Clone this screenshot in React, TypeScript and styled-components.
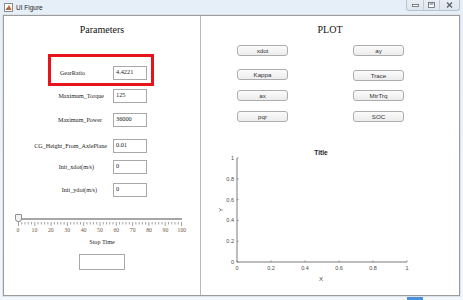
import styled, { createGlobalStyle } from "styled-components";

const GlobalStyle = createGlobalStyle`
  html, body {
    margin: 0;
    padding: 0;
    background: #eef3f8;
  }
  * { box-sizing: border-box; }
`;

const Window = styled.div`
  width: 463px;
  height: 300px;
  display: flex;
  flex-direction: column;
  background: linear-gradient(180deg, #e6eef7 0%, #eef3f9 40%, #f3f6fa 100%);
  position: relative;
  overflow: hidden;
`;

const TitleBar = styled.div`
  height: 15px;
  display: flex;
  align-items: center;
  padding: 0 3px 0 4px;
  gap: 3px;
`;

const TitleText = styled.span`
  font-family: "Liberation Sans", Arial, sans-serif;
  font-size: 6.5px;
  color: #1e1e1e;
`;

const WindowControls = styled.div`
  margin-left: auto;
  align-self: flex-start;
  display: flex;
  height: 11px;
  border: 1px solid #b9c3cf;
  border-top: none;
  border-radius: 0 0 3px 3px;
  background: linear-gradient(180deg, #e9eef4, #dfe6ee);
`;

const ControlButton = styled.div<{ $w: number }>`
  width: ${(p) => p.$w}px;
  height: 100%;
  display: flex;
  align-items: center;
  justify-content: center;
  border-right: 1px solid #c3ccd6;
  &:last-child { border-right: none; }
`;

const Body = styled.div`
  flex: 1;
  display: flex;
  margin: 0 3px 4px 3px;
  border: 1px solid #9c9c9c;
  background: #ffffff;
  box-shadow: 0 0 0 1px #dde3ea;
`;

const LeftPanel = styled.div`
  width: 197px;
  border-right: 1px solid #b8b8b8;
  display: flex;
  flex-direction: column;
`;

const RightPanel = styled.div`
  flex: 1;
  display: flex;
  flex-direction: column;
`;

const Heading = styled.div`
  height: 28px;
  line-height: 28px;
  text-align: center;
  font-family: "Liberation Serif", "Times New Roman", serif;
  font-size: 10px;
  color: #111;
`;

const Highlight = styled.div`
  margin: 10px 0 0 44px;
  width: 106px;
  height: 32px;
  border: 3px solid #e8141b;
  padding-top: 9px;
`;

const Row = styled.div<{ $labelCol: number; $top?: number }>`
  display: grid;
  grid-template-columns: ${(p) => p.$labelCol}px 34px;
  align-items: center;
  height: 14px;
  margin-top: ${(p) => p.$top ?? 0}px;
`;

const Label = styled.span<{ $pad: number }>`
  text-align: right;
  padding-right: ${(p) => p.$pad}px;
  font-family: "Liberation Serif", "Times New Roman", serif;
  font-size: 6.1px;
  color: #222;
  white-space: nowrap;
`;

const ValueBox = styled.div`
  height: 14px;
  border: 1px solid #a9a9a9;
  background: #fff;
  padding: 1px 2px;
  font-family: "Liberation Serif", "Times New Roman", serif;
  font-size: 6.3px;
  line-height: 8px;
  color: #222;
`;

const SliderBlock = styled.div`
  margin: 16px 0 0 14px;
  width: 164px;
  display: flex;
  flex-direction: column;
`;

const TrackArea = styled.div`
  position: relative;
  height: 9px;
`;

const Track = styled.div`
  position: absolute;
  left: 0;
  right: 0;
  top: 5px;
  height: 2px;
  background: #a6a6a6;
`;

const Thumb = styled.div`
  position: absolute;
  left: -3px;
  top: 1px;
  width: 7px;
  height: 8px;
  background: #f2f2f2;
  border: 1px solid #8f8f8f;
  border-radius: 1px 1px 3px 3px;
`;

const TickLabels = styled.div`
  display: flex;
  justify-content: space-between;
  margin: 0 -6px;
  height: 9px;
`;

const TickLabel = styled.span`
  width: 12px;
  text-align: center;
  font-family: "Liberation Serif", "Times New Roman", serif;
  font-size: 5.8px;
  line-height: 9px;
  color: #6e5a44;
`;

const Caption = styled.div`
  margin-top: 2px;
  height: 10px;
  line-height: 10px;
  text-align: center;
  font-family: "Liberation Serif", "Times New Roman", serif;
  font-size: 6.2px;
  color: #222;
`;

const StopBox = styled.div`
  margin: 7px 0 0 75px;
  width: 46px;
  height: 16px;
  border: 1px solid #a9a9a9;
`;

const ButtonRow = styled.div<{ $top: number }>`
  display: flex;
  gap: 65px;
  margin: ${(p) => p.$top}px 0 0 36px;
`;

const PlotButton = styled.div<{ $shift?: number }>`
  width: 51px;
  height: 11px;
  margin-top: ${(p) => p.$shift ?? 0}px;
  border: 1px solid #adadad;
  border-radius: 3px;
  background: linear-gradient(180deg, #fbfbfb 0%, #ececec 100%);
  display: flex;
  align-items: center;
  justify-content: center;
  font-family: "Liberation Sans", Arial, sans-serif;
  font-size: 6.2px;
  color: #333;
`;

const Chart = styled.svg`
  display: block;
  margin-top: 17px;
`;

const TaskbarHint = styled.div`
  position: absolute;
  left: 407px;
  bottom: 0;
  width: 16px;
  height: 3px;
  background: #4d8fd9;
`;

const rows = [
  { label: "Maximum_Torque", value: "125", pad: 9, top: 3 },
  { label: "Maximum_Power", value: "36000", pad: 11, top: 10 },
  { label: "CG_Height_From_AxlePlane", value: "0.01", pad: 6, top: 12 },
  { label: "Init_xdot(m/s)", value: "0", pad: 19, top: 7 },
  { label: "Init_ydot(m/s)", value: "0", pad: 16, top: 9 },
];

const buttonRows: { top: number; left: string; right: string; shift?: number }[] = [
  { top: 1, left: "xdot", right: "ay" },
  { top: 13, left: "Kappa", right: "Trace", shift: 1 },
  { top: 9, left: "ax", right: "MtrTrq" },
  { top: 10, left: "pqr", right: "SOC" },
];

const MatlabIcon = () => (
  <svg width="9" height="9" viewBox="0 0 9 9">
    <rect x="0.5" y="0.5" width="8" height="8" fill="#fff" stroke="#8a8a8a" />
    <path d="M1.5 7 L3.5 4.5 L5 2 L6.2 4 L7.5 7 Z" fill="#d9632a" />
    <path d="M1.5 7 L3.5 4.5 L4.6 5.4 Z" fill="#2f6fb3" />
  </svg>
);

const SliderTicks = () => {
  const ticks = [];
  for (let i = 0; i <= 50; i++) {
    const x = 0.5 + (i * 163) / 50;
    const major = i % 5 === 0;
    ticks.push(<line key={i} x1={x} x2={x} y1={0} y2={major ? 4 : 2.5} stroke="#8c8c8c" strokeWidth="0.8" />);
  }
  return (
    <svg width="164" height="4" style={{ display: "block", overflow: "visible" }}>
      {ticks}
    </svg>
  );
};

const PlotAxes = () => {
  const x0 = 36;
  const x1 = 206;
  const yTop = 19;
  const yBot = 123;
  const yVals = ["0", "0.2", "0.4", "0.6", "0.8", "1"];
  const xVals = ["0", "0.2", "0.4", "0.6", "0.8", "1"];
  const tickStyle = { fontFamily: "'Liberation Sans', Arial, sans-serif", fontSize: 5.5, fill: "#4a4a4a" };
  return (
    <Chart width="257" height="152">
      <text x="120" y="16" textAnchor="middle" style={{ ...tickStyle, fontSize: 6.6, fontWeight: 700, fill: "#1a1a1a" }}>
        Title
      </text>
      <line x1={x0} x2={x0} y1={yTop} y2={yBot} stroke="#7a7a7a" strokeWidth="1" />
      <line x1={x0} x2={x1} y1={yBot} y2={yBot} stroke="#7a7a7a" strokeWidth="1" />
      {yVals.map((v, i) => {
        const y = yBot - (i * (yBot - yTop)) / 5;
        return (
          <g key={"y" + v}>
            <line x1={x0} x2={x0 + 1.5} y1={y} y2={y} stroke="#7a7a7a" strokeWidth="0.8" />
            <text x={x0 - 3} y={y + 2} textAnchor="end" style={tickStyle}>
              {v}
            </text>
          </g>
        );
      })}
      {xVals.map((v, i) => {
        const x = x0 + (i * (x1 - x0)) / 5;
        return (
          <g key={"x" + v}>
            <line x1={x} x2={x} y1={yBot} y2={yBot - 1.5} stroke="#7a7a7a" strokeWidth="0.8" />
            <text x={x} y={yBot + 8} textAnchor="middle" style={tickStyle}>
              {v}
            </text>
          </g>
        );
      })}
      <text x="120" y="142" textAnchor="middle" style={{ ...tickStyle, fontSize: 6.2 }}>
        X
      </text>
      <text x="22" y="71" textAnchor="middle" transform="rotate(-90 22 71)" style={{ ...tickStyle, fontSize: 6.2 }}>
        Y
      </text>
    </Chart>
  );
};

export default function App() {
  return (
    <>
      <GlobalStyle />
      <Window>
        <TitleBar>
          <MatlabIcon />
          <TitleText>UI Figure</TitleText>
          <WindowControls>
            <ControlButton $w={17}>
              <svg width="7" height="4"><rect x="0.5" y="1.5" width="6" height="2" fill="#fff" stroke="#5a6470" strokeWidth="0.8" /></svg>
            </ControlButton>
            <ControlButton $w={16}>
              <svg width="7" height="6"><rect x="0.5" y="0.5" width="6" height="5" fill="#fff" stroke="#5a6470" strokeWidth="0.8" /><rect x="1.5" y="1.5" width="4" height="1" fill="#5a6470" /></svg>
            </ControlButton>
            <ControlButton $w={19}>
              <svg width="7" height="6"><path d="M1 0.5 L6 5.5 M6 0.5 L1 5.5" stroke="#5a6470" strokeWidth="1.4" /></svg>
            </ControlButton>
          </WindowControls>
        </TitleBar>
        <Body>
          <LeftPanel>
            <Heading>Parameters</Heading>
            <Highlight>
              <Row $labelCol={62}>
                <Label $pad={28}>GearRatio</Label>
                <ValueBox>4.4221</ValueBox>
              </Row>
            </Highlight>
            {rows.map((r) => (
              <Row key={r.label} $labelCol={109} $top={r.top}>
                <Label $pad={r.pad}>{r.label}</Label>
                <ValueBox>{r.value}</ValueBox>
              </Row>
            ))}
            <SliderBlock>
              <TrackArea>
                <Track />
                <Thumb />
              </TrackArea>
              <SliderTicks />
              <TickLabels>
                {["0", "10", "20", "30", "40", "50", "60", "70", "80", "90", "100"].map((t) => (
                  <TickLabel key={t}>{t}</TickLabel>
                ))}
              </TickLabels>
            </SliderBlock>
            <Caption>Stop Time</Caption>
            <StopBox />
          </LeftPanel>
          <RightPanel>
            <Heading>PLOT</Heading>
            {buttonRows.map((b) => (
              <ButtonRow key={b.left} $top={b.top}>
                <PlotButton>{b.left}</PlotButton>
                <PlotButton $shift={b.shift}>{b.right}</PlotButton>
              </ButtonRow>
            ))}
            <PlotAxes />
          </RightPanel>
        </Body>
        <TaskbarHint />
      </Window>
    </>
  );
}
